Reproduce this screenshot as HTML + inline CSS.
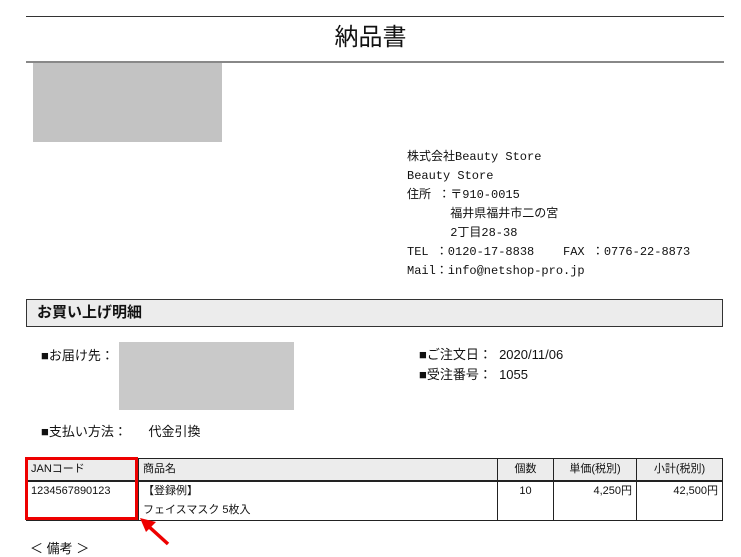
<!DOCTYPE html>
<html><head><meta charset="utf-8"><style>
body{margin:0;width:741px;height:553px;background:#fff;font-family:"Liberation Sans","Noto Sans CJK JP",sans-serif;color:#111;position:relative;overflow:hidden}
.a{position:absolute;white-space:nowrap}
table{border-collapse:collapse;position:absolute;left:26px;top:458px;width:697px;font-size:11px}
td{border:1px solid #222;padding:0 4px;vertical-align:top}
thead td{background:#ececec;height:21px;line-height:21px;border-bottom:2px solid #222}
</style></head><body>
<div class="a" style="left:26px;top:16px;width:698px;height:1px;background:#333"></div>
<div class="a" style="left:0;width:741px;top:22px;text-align:center;font-size:24px;line-height:32px">納品書</div>
<div class="a" style="left:26px;top:61px;width:698px;height:2px;background:#888"></div>
<div class="a" style="left:33px;top:63px;width:189px;height:79px;background:#c3c3c3"></div>
<div class="a" style="left:407px;top:148px;font-size:12px;line-height:19px;font-family:'Liberation Mono','Noto Sans CJK JP',monospace">
株式会社Beauty Store<br>Beauty Store<br>住所 ：〒910-0015<br>&nbsp;&nbsp;&nbsp;&nbsp;&nbsp;&nbsp;福井県福井市二の宮<br>&nbsp;&nbsp;&nbsp;&nbsp;&nbsp;&nbsp;2丁目28-38<br>TEL ：0120-17-8838&nbsp;&nbsp;&nbsp;&nbsp;FAX ：0776-22-8873<br>Mail：info@netshop-pro.jp</div>
<div class="a" style="left:26px;top:299px;width:697px;background:#ececec;border:1px solid #333;font-size:15px;font-weight:bold;line-height:26px;padding-left:10px;box-sizing:border-box;height:28px">お買い上げ明細</div>
<div class="a" style="left:41px;top:345px;font-size:13px">■お届け先：</div>
<div class="a" style="left:119px;top:342px;width:175px;height:68px;background:#c9c9c9"></div>
<div class="a" style="left:419px;top:345px;font-size:13px;line-height:20px">■ご注文日：&nbsp;&nbsp;2020/11/06<br>■受注番号：&nbsp;&nbsp;1055</div>
<div class="a" style="left:41px;top:421px;font-size:13px">■支払い方法：&nbsp;&nbsp;&nbsp;&nbsp;&nbsp;&nbsp;代金引換</div>
<table><thead><tr><td style="width:103px">JANコード</td><td>商品名</td><td style="width:47px;text-align:center">個数</td><td style="width:74px;text-align:center">単価(税別)</td><td style="width:77px;text-align:center">小計(税別)</td></tr></thead>
<tbody><tr><td style="height:36px;line-height:19px">1234567890123</td><td style="line-height:19px">【登録例】<br>フェイスマスク 5枚入</td><td style="text-align:center;line-height:19px">10</td><td style="text-align:right;line-height:19px">4,250円</td><td style="text-align:right;line-height:19px">42,500円</td></tr></tbody></table>
<div class="a" style="left:25px;top:457px;width:113px;height:63px;border:3px solid #e00;box-sizing:border-box"></div>
<svg class="a" style="left:136px;top:514px" width="40" height="34"><line x1="32" y1="30" x2="10" y2="10" stroke="#e00" stroke-width="3.5"/><polygon points="4,4 20,8 10,18" fill="#e00"/></svg>
<div class="a" style="left:30px;top:538px;font-size:13px">＜ 備考 ＞</div>
</body></html>
